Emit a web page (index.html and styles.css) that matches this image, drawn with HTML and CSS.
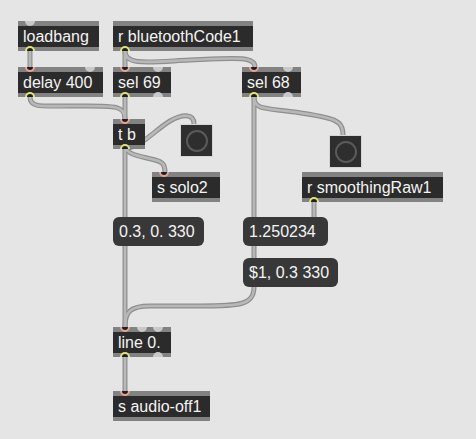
FILE: index.html
```html
<!DOCTYPE html>
<html lang="en">
  <head>
    <meta charset="UTF-8" />
    <meta name="viewport" content="width=device-width, initial-scale=1.0" />
    <title>Patcher</title>
    <link rel="stylesheet" href="styles.css">
  </head>
  <body>
    <div class="patcher">
      <!-- patch cords, drawn under the boxes -->
      <svg class="cords" width="476" height="439" viewBox="0 0 476 439">
        <defs>
          <path id="c1" d="M30,51 V67" />
          <path id="c2" d="M125,51 V67" />
          <path id="c3" d="M125,51 C124,66 150,62 190,60 C235,58 255,56 255,67" />
          <path id="c4" d="M30,97 C30,108 42,106 70,106 C112,106 125,104 125,119" />
          <path id="c5" d="M125,97 V119" />
          <path id="c6" d="M126,148 C140,148 155,130 170,121 C182,114 194,113 194,124" />
          <path id="c7" d="M126,148 C128,155 140,156 155,160 C163,162 165,165 165,172" />
          <path id="c8" d="M125,148 V327" />
          <path id="c9" d="M254,97 C254,110 265,108 295,112 C335,118 343,120 343,135" />
          <path id="c10" d="M254,97 V217 M254,246 V258" />
          <path id="c11" d="M314,202 V217" />
          <path id="c12" d="M254,287 C254,305 240,306 200,306 L150,306 C130,306 125,312 125,327" />
          <path id="c13" d="M125,357 V391" />
        </defs>
        <g class="edge">
          <use href="#c1" /><use href="#c2" /><use href="#c3" /><use href="#c4" />
          <use href="#c5" /><use href="#c6" /><use href="#c7" /><use href="#c8" />
          <use href="#c9" /><use href="#c10" /><use href="#c11" /><use href="#c12" />
          <use href="#c13" />
        </g>
        <g class="core">
          <use href="#c1" /><use href="#c2" /><use href="#c3" /><use href="#c4" />
          <use href="#c5" /><use href="#c6" /><use href="#c7" /><use href="#c8" />
          <use href="#c9" /><use href="#c10" /><use href="#c11" /><use href="#c12" />
          <use href="#c13" />
        </g>
      </svg>

      <div class="obj n-loadbang">
        <span class="port in left idle"></span>
        <div class="obj-text">loadbang</div>
        <span class="port out left on"></span>
      </div>

      <div class="obj n-rbt">
        <div class="obj-text">r bluetoothCode1</div>
        <span class="port out left on"></span>
      </div>

      <div class="obj n-delay">
        <span class="port in left on"></span>
        <span class="port in right idle"></span>
        <div class="obj-text">delay 400</div>
        <span class="port out left on"></span>
      </div>

      <div class="obj n-sel69">
        <span class="port in left on"></span>
        <span class="port in right idle"></span>
        <div class="obj-text">sel 69</div>
        <span class="port out left on"></span>
        <span class="port out right idle"></span>
      </div>

      <div class="obj n-sel68">
        <span class="port in left on"></span>
        <span class="port in right idle"></span>
        <div class="obj-text">sel 68</div>
        <span class="port out left on"></span>
        <span class="port out right idle"></span>
      </div>

      <div class="obj n-tb">
        <span class="port in left on"></span>
        <div class="obj-text">t b</div>
        <span class="port out left on"></span>
      </div>

      <div class="bang n-bang1"><span class="ring"></span></div>
      <div class="bang n-bang2"><span class="ring"></span></div>

      <div class="obj n-solo">
        <span class="port in left on"></span>
        <div class="obj-text">s solo2</div>
      </div>

      <div class="obj n-rsmooth">
        <div class="obj-text">r smoothingRaw1</div>
        <span class="port out left on"></span>
      </div>

      <div class="msg n-msg1">0.3, 0. 330</div>
      <div class="msg n-msg2">1.250234</div>
      <div class="msg n-msg3">$1, 0.3 330</div>

      <div class="obj n-line">
        <span class="port in left on"></span>
        <span class="port in mid idle"></span>
        <span class="port in right idle"></span>
        <div class="obj-text">line 0.</div>
        <span class="port out left on"></span>
        <span class="port out right idle"></span>
      </div>

      <div class="obj n-audio">
        <span class="port in left on"></span>
        <div class="obj-text">s audio-off1</div>
      </div>
    </div>
  </body>
</html>
```

FILE: styles.css
```css
* {
  margin: 0;
  padding: 0;
  box-sizing: border-box;
}

body {
  background: #e5e5e5;
  font-family: "Liberation Sans", Arial, sans-serif;
}

.patcher {
  position: relative;
  width: 476px;
  height: 439px;
  overflow: hidden;
}

/* Patch cords */
.cords {
  position: absolute;
  left: 0;
  top: 0;
}

.cords path {
  fill: none;
  stroke-linecap: round;
}

.cords .edge {
  stroke: #8f8f8f;
  stroke-width: 5;
  fill: none;
}

.cords .core {
  stroke: #b8b8b8;
  stroke-width: 2.6;
  fill: none;
}

/* Object boxes */
.obj {
  position: absolute;
  height: 30px;
  background: #828282;
  padding: 5px 0 4px;
  overflow: hidden;
}

.obj-text {
  height: 21px;
  background: #2b2b2b;
  color: #f4f4f4;
  font-size: 16px;
  line-height: 21px;
  padding-left: 5px;
  white-space: nowrap;
}

.port {
  position: absolute;
  width: 10px;
  height: 10px;
  border-radius: 50%;
}

.port.in {
  top: -5px;
}

.port.out {
  bottom: -5px;
}

.port.left {
  left: 7px;
}

.port.mid {
  left: 24px;
}

.port.right {
  right: 8px;
}

.port.idle {
  background: #c9c9c9;
}

.port.in.on {
  background: #1f1f1f;
  border: 2px solid #eaa597;
}

.port.out.on {
  background: #1f1f1f;
  border: 2px solid #e2e27a;
}

/* Message boxes */
.msg {
  position: absolute;
  height: 29px;
  background: #383838;
  border-radius: 6px;
  color: #f4f4f4;
  font-size: 16px;
  line-height: 29px;
  padding-left: 6px;
  white-space: nowrap;
}

/* Bang buttons */
.bang {
  position: absolute;
  width: 33px;
  height: 33px;
  background: #2e2e2e;
  border: 1px solid #d6d6d6;
  display: flex;
  align-items: center;
  justify-content: center;
}

.ring {
  width: 22px;
  height: 22px;
  border-radius: 50%;
  border: 2.5px solid #5a5a5a;
}

/* Node placement on the canvas */
.n-loadbang { left: 18px; top: 21px; width: 81px; }
.n-rbt { left: 113px; top: 21px; width: 140px; }
.n-delay { left: 18px; top: 67px; width: 85px; }
.n-sel69 { left: 113px; top: 67px; width: 58px; }
.n-sel68 { left: 242px; top: 67px; width: 59px; }
.n-tb { left: 113px; top: 119px; width: 32px; }
.n-bang1 { left: 180px; top: 124px; }
.n-bang2 { left: 329px; top: 135px; }
.n-solo { left: 152px; top: 172px; width: 68px; }
.n-rsmooth { left: 302px; top: 172px; width: 141px; }
.n-msg1 { left: 113px; top: 217px; width: 91px; }
.n-msg2 { left: 243px; top: 217px; width: 85px; }
.n-msg3 { left: 243px; top: 258px; width: 95px; }
.n-line { left: 113px; top: 327px; width: 58px; }
.n-audio { left: 113px; top: 391px; width: 97px; }
```
